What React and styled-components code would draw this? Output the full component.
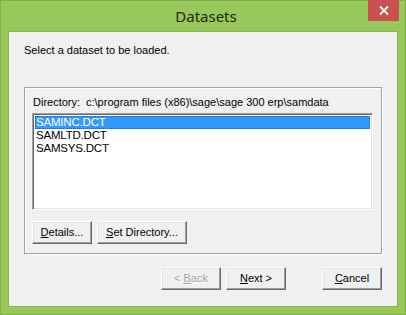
import React from "react";
import styled, { createGlobalStyle } from "styled-components";

const Global = createGlobalStyle`
  html, body { margin: 0; padding: 0; background: #98c75b; }
  body { font-family: "Liberation Sans", Arial, sans-serif; }
`;

const Window = styled.div`
  width: 406px;
  height: 315px;
  box-sizing: border-box;
  background: #98c75b;
  border: 1px solid #7fb043;
  display: flex;
  flex-direction: column;
`;

const TitleBar = styled.div`
  height: 30px;
  position: relative;
  display: flex;
  align-items: center;
  justify-content: center;
`;

const Title = styled.div`
  font-family: "Noto Sans", "Open Sans", sans-serif;
  font-size: 15px;
  color: #1d2a12;
  margin-top: -1px;
  margin-left: 6px;
`;

const CloseButton = styled.div`
  position: absolute;
  right: 6px;
  top: -1px;
  width: 31px;
  height: 21px;
  background: #c75050;
  display: flex;
  align-items: center;
  justify-content: center;
`;

const Client = styled.div`
  flex: 1;
  margin: 0 7px 7px 7px;
  background: #f0f0f0;
  border: 1px solid #86b54d;
  display: flex;
  flex-direction: column;
  padding: 0 15px;
  font-size: 11px;
  color: #000;
`;

const Prompt = styled.div`
  margin-top: 11px;
  height: 14px;
  line-height: 14px;
`;

const Group = styled.div`
  margin-top: 30px;
  height: 167px;
  box-sizing: border-box;
  border: 1px solid #a0a0a0;
  box-shadow: inset 1px 1px 0 #fff, 1px 1px 0 #fff;
  padding: 7px 8px 0 7px;
  display: flex;
  flex-direction: column;
`;

const DirRow = styled.div`
  display: flex;
  height: 14px;
  line-height: 14px;
  padding-left: 1px;
`;

const DirLabel = styled.span`
  width: 53px;
`;

const ListBox = styled.div`
  margin-top: 4px;
  height: 97px;
  box-sizing: border-box;
  background: #fff;
  border: 1px solid;
  border-color: #a0a0a0 #fff #fff #a0a0a0;
  box-shadow: inset 1px 1px 0 #696969, inset -1px -1px 0 #e3e3e3;
  padding: 2px 2px 0 2px;
  display: flex;
  flex-direction: column;
`;

const Item = styled.div`
  height: 13px;
  line-height: 13px;
  padding-left: 1px;
  font-size: 11.5px;
  letter-spacing: -0.2px;
  color: ${(p) => (p.$selected ? "#fff" : "#000")};
  background: ${(p) => (p.$selected ? "#3399ff" : "transparent")};
  outline: ${(p) => (p.$selected ? "1px dotted #1a5fa8" : "none")};
  outline-offset: -1px;
`;

const ButtonRow = styled.div`
  display: flex;
  gap: ${(p) => p.$gap || 5}px;
  margin-top: ${(p) => p.$top || 11}px;
  justify-content: ${(p) => (p.$end ? "flex-end" : "flex-start")};
`;

const Button = styled.div`
  width: ${(p) => p.$w}px;
  height: 23px;
  box-sizing: border-box;
  background: #f0f0f0;
  border: 1px solid;
  border-color: #fff #696969 #696969 #fff;
  box-shadow: inset -1px -1px 0 #a0a0a0, inset 1px 1px 0 #e3e3e3;
  display: flex;
  align-items: center;
  justify-content: center;
  color: ${(p) => (p.$disabled ? "#a0a0a0" : "#000")};
  text-shadow: ${(p) => (p.$disabled ? "1px 1px 0 #fff" : "none")};
  padding-bottom: 1px;
  margin-left: ${(p) => p.$ml || 0}px;
  white-space: pre;
`;

const Label = styled.span`
  white-space: pre;
`;

const U = styled.span`
  text-decoration: underline;
`;

export default function App() {
  return (
    <>
      <Global />
      <Window>
        <TitleBar>
          <Title>Datasets</Title>
          <CloseButton>
            <svg width="10" height="9" viewBox="0 0 10 9">
              <path d="M1 0.5 L9 8.5 M9 0.5 L1 8.5" stroke="#fff" strokeWidth="1.8" />
            </svg>
          </CloseButton>
        </TitleBar>
        <Client>
          <Prompt>Select a dataset to be loaded.</Prompt>
          <Group>
            <DirRow>
              <DirLabel>Directory:</DirLabel>
              <span>c:\program files (x86)\sage\sage 300 erp\samdata</span>
            </DirRow>
            <ListBox>
              <Item $selected>SAMINC.DCT</Item>
              <Item>SAMLTD.DCT</Item>
              <Item>SAMSYS.DCT</Item>
            </ListBox>
            <ButtonRow>
              <Button $w={60}>
                <Label><U>D</U>etails...</Label>
              </Button>
              <Button $w={90}>
                <Label><U>S</U>et Directory...</Label>
              </Button>
            </ButtonRow>
          </Group>
          <ButtonRow $end $gap={0} $top={13}>
            <Button $w={60} $disabled>
              <Label>{"< "}<U>B</U>ack</Label>
            </Button>
            <Button $w={60}>
              <Label><U>N</U>{"ext >"}</Label>
            </Button>
            <Button $w={60} $ml={31}>
              <Label><U>C</U>ancel</Label>
            </Button>
          </ButtonRow>
        </Client>
      </Window>
    </>
  );
}
